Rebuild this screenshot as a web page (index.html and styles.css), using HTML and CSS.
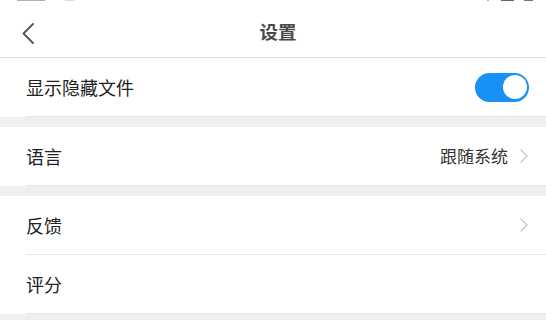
FILE: index.html
```html
<!DOCTYPE html>
<html lang="zh-CN">
<head>
<meta charset="utf-8">
<title>设置</title>
<link rel="stylesheet" href="styles.css">
</head>
<body>
<div class="status">
  <div class="status-left"><span class="m m1"></span><span class="m m2"></span></div>
  <div class="status-right"><span class="m m3"></span><span class="m m4"></span><span class="m m5"></span></div>
</div>
<header class="nav">
  <div class="nav-left">
    <svg class="back" width="12" height="21" viewBox="0 0 12 21"><polyline points="11,1 1.5,10.5 11,20" fill="none" stroke="#555" stroke-width="1.8" stroke-linecap="round" stroke-linejoin="round"/></svg>
  </div>
  <div class="nav-title">设置</div>
  <div class="nav-right"></div>
</header>

<section class="group">
  <div class="item">
    <div class="item-inner">
      <span class="label">显示隐藏文件</span>
      <span class="toggle"><span class="knob"></span></span>
    </div>
  </div>
</section>

<section class="group">
  <div class="item">
    <div class="item-inner">
      <span class="label">语言</span>
      <span class="value">跟随系统</span>
      <svg class="chev" width="8" height="14" viewBox="0 0 8 14"><polyline points="1,1 7,7 1,13" fill="none" stroke="#c2c2c2" stroke-width="1.2" stroke-linecap="round" stroke-linejoin="round"/></svg>
    </div>
  </div>
</section>

<section class="group">
  <div class="item">
    <div class="item-inner">
      <span class="label">反馈</span>
      <svg class="chev" width="8" height="14" viewBox="0 0 8 14"><polyline points="1,1 7,7 1,13" fill="none" stroke="#c2c2c2" stroke-width="1.2" stroke-linecap="round" stroke-linejoin="round"/></svg>
    </div>
  </div>
  <div class="item">
    <div class="item-inner">
      <span class="label">评分</span>
    </div>
  </div>
</section>
</body>
</html>
```

FILE: styles.css
```css
html, body {
  margin: 0;
  padding: 0;
}
body {
  background: #efefef;
  font-family: "Noto Sans CJK SC", "Noto Sans", sans-serif;
  color: #222;
  width: 546px;
  height: 320px;
  overflow: hidden;
}
.status {
  height: 2px;
  background: #fff;
  display: flex;
  justify-content: space-between;
  padding: 0 13px 0 17px;
}
.status-left, .status-right {
  display: flex;
  align-items: flex-start;
}
.m {
  display: block;
  height: 1px;
}
.m1 { width: 28px; background: #b0b0b0; }
.m2 { width: 10px; background: #dddddd; margin-left: 20px; }
.m3 { width: 2px; background: #aaaaaa; }
.m4 { width: 13px; background: #666666; margin-left: 12px; }
.m5 { width: 9px; background: #777777; margin-left: 10px; }

.nav {
  height: 47px;
  padding-top: 8px;
  background: #fff;
  border-bottom: 1px solid #dcdcdc;
  display: grid;
  grid-template-columns: 1fr auto 1fr;
  align-items: center;
  padding-left: 10px;
}
.nav-left {
  display: flex;
  align-items: center;
  padding-left: 12px;
}
.back {
  display: block;
}
.nav-title {
  font-size: 18.5px;
  font-weight: 700;
  color: #4a4a4a;
  line-height: 24px;
  padding-bottom: 5px;
}
.group {
  background: #fff;
  margin-bottom: 10px;
}
.item {
  padding-left: 26px;
}
.item-inner {
  height: 58px;
  border-bottom: 1px solid #e6e6e6;
  display: flex;
  align-items: center;
  padding-right: 18px;
}
.label {
  font-size: 18px;
  color: #222;
  flex: 1;
  line-height: 24px;
}
.value {
  font-size: 17px;
  color: #333;
  line-height: 24px;
  margin-right: 12px;
}
.chev {
  display: block;
}
.toggle {
  width: 54px;
  height: 29px;
  border-radius: 15px;
  background: #1890f5;
  display: flex;
  align-items: center;
  justify-content: flex-end;
  padding-right: 2px;
  box-sizing: border-box;
  margin-right: -1px;
}
.knob {
  width: 24px;
  height: 24px;
  border-radius: 50%;
  background: #fff;
}
```
